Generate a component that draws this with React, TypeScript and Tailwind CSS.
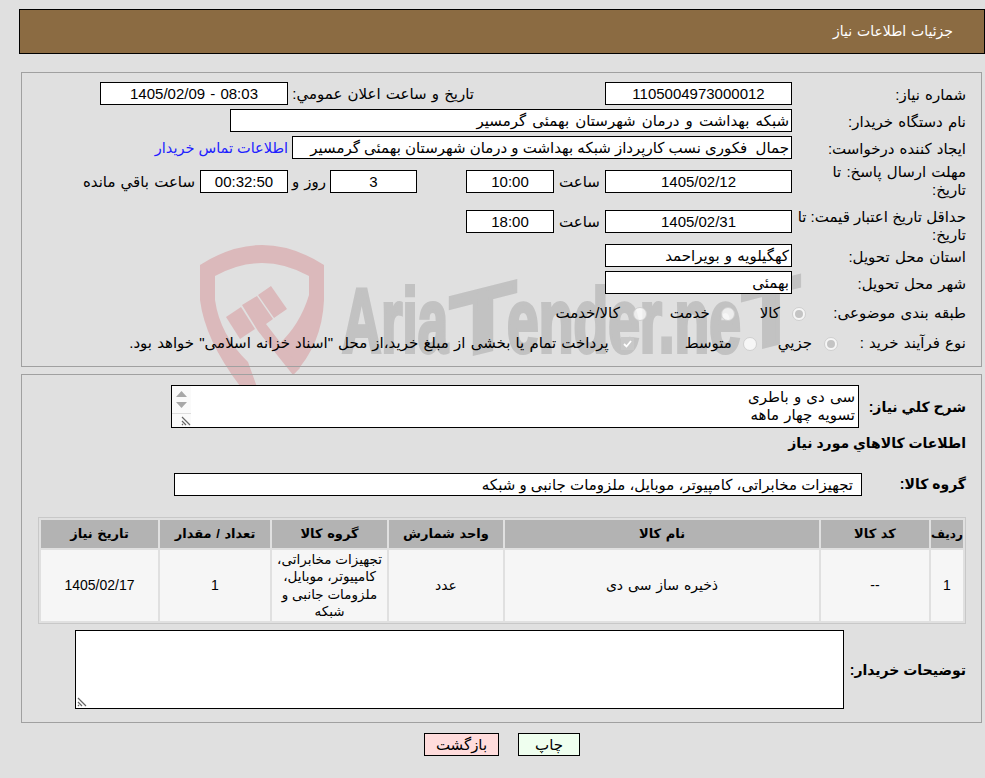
const FONT = "font-['Liberation_Sans','DejaVu_Sans',sans-serif]"

function Field({ className, children }: { className: string; children?: React.ReactNode }) {
  return (
    <div className={`h-[23px] shrink-0 overflow-hidden whitespace-nowrap border border-black bg-white px-[2px] text-[15px] leading-[21px] ${className}`}>
      {children}
    </div>
  )
}

function Label({ children }: { children: React.ReactNode }) {
  return <div className="w-[174px] shrink-0 whitespace-nowrap pt-[1px] text-[15px] leading-[23px]">{children}</div>
}

function Radio({ checked }: { checked?: boolean }) {
  return (
    <span className="flex h-[14px] w-[14px] shrink-0 items-center justify-center rounded-full border border-[#cfcfcf] bg-white/70">
      {checked && <span className="h-[8px] w-[8px] rounded-full bg-[#c4c4c4]" />}
    </span>
  )
}

function Resizer() {
  return (
    <svg width="10" height="10" viewBox="0 0 10 10" className="block">
      <path d="M1 1l8 8M1 5l4 4M1 8l1 1" stroke="#666" strokeWidth="1.2" fill="none" />
    </svg>
  )
}

function Watermark() {
  return (
    <svg width="985" height="778" viewBox="0 0 985 778" className="pointer-events-none absolute left-0 top-0 [direction:ltr] [word-spacing:0]">
      <g fill="#dbb9bb">
        <path d="M200 265Q262 225 324 265V300Q322 345 293 375L278 345Q300 325 309 295V276Q262 250 215 276V300Q220 335 248 362L257 387L240 386Q205 340 200 300Z" />
        <path d="M226 317L241 307L255 329L240 339Z" />
        <path d="M242 305L257 296L273 319L266 324L300 368L293 375L258 331Z" />
        <path d="M258 295L271 286L287 309L274 318Z" />
      </g>
      <g fill="#c2c2c2" stroke="#c2c2c2" strokeWidth="4" fontFamily="'Liberation Sans',sans-serif" fontWeight="700" fontSize="90">
        <text x="342" y="352" textLength="106" lengthAdjust="spacingAndGlyphs">Aria</text>
        <text x="450" y="352" textLength="66" lengthAdjust="spacingAndGlyphs" transform="translate(0 120) skewY(-14)">T</text>
        <text x="507" y="352" textLength="234" lengthAdjust="spacingAndGlyphs">ender.ne</text>
        <text x="742" y="352" textLength="58" lengthAdjust="spacingAndGlyphs" transform="translate(0 185) skewY(-14)">T</text>
      </g>
    </svg>
  )
}

const headers = ['ردیف', 'کد کالا', 'نام کالا', 'واحد شمارش', 'گروه کالا', 'تعداد / مقدار', 'تاریخ نیاز']

export default function App() {
  return (
    <div dir="rtl" className={`relative h-[778px] w-[985px] overflow-hidden bg-[#e0e0e0] text-black [word-spacing:1px] ${FONT}`}>
      <Watermark />
      <div className="relative">
        <div className="ml-[19px] mt-[9px] h-[45px] border border-black bg-[#8b6b42] pr-[31px] text-[14px] leading-[43px] text-white">
          جزئیات اطلاعات نیاز
        </div>

        <div className="ml-[21px] mr-[3px] mt-[18px] h-[295px] border border-[#a0a0a0] pr-[15px] pt-[9px]">
          <div className="flex h-[27px]">
            <Label>شماره نیاز:</Label>
            <Field className="w-[187px] text-center">1105004973000012</Field>
            <div className="w-[131px] shrink-0" />
            <div className="w-[186px] shrink-0 text-[15px] leading-[23px]">تاریخ و ساعت اعلان عمومي:</div>
            <Field className="w-[188px] text-center">08:03 - 1405/02/09</Field>
          </div>
          <div className="flex h-[27px]">
            <Label>نام دستگاه خریدار:</Label>
            <Field className="w-[562px] [word-spacing:2px]">شبکه بهداشت و درمان شهرستان بهمئی گرمسیر</Field>
          </div>
          <div className="flex h-[27px]">
            <Label>ایجاد کننده درخواست:</Label>
            <Field className="w-[500px] [word-spacing:0px]">جمال&nbsp; فکوری نسب کارپرداز شبکه بهداشت و درمان شهرستان بهمئی گرمسیر</Field>
            <a className="mr-[4px] pt-[1px] text-[14.500px] leading-[23px] text-[#2020ff] [word-spacing:0px]">اطلاعات تماس خریدار</a>
          </div>
          <div className="flex h-[45px] pt-[7px]">
            <div className="-mt-[7px] w-[174px] shrink-0 pl-[7px] text-[15px] leading-[18px]">مهلت ارسال پاسخ: تا تاریخ:</div>
            <Field className="w-[187px] text-center">1405/02/12</Field>
            <div className="w-[51px] shrink-0 text-center text-[15px] leading-[23px]">ساعت</div>
            <Field className="w-[88px] text-center">10:00</Field>
            <div className="w-[49px] shrink-0" />
            <Field className="w-[87px] text-center">3</Field>
            <div className="w-[42px] shrink-0 text-center text-[15px] leading-[23px]">روز و</div>
            <Field className="w-[88px] bg-[#ffffe8] text-center">00:32:50</Field>
            <div className="mr-[5px] whitespace-nowrap text-[15px] leading-[23px]">ساعت باقي مانده</div>
          </div>
          <div className="flex h-[36px] pt-[2px]">
            <div className="-mt-[2px] w-[174px] shrink-0 text-[15px] leading-[18px] [word-spacing:0px]">حداقل تاریخ اعتبار قیمت: تا تاریخ:</div>
            <Field className="w-[187px] text-center">1405/02/31</Field>
            <div className="w-[51px] shrink-0 text-center text-[15px] leading-[23px]">ساعت</div>
            <Field className="w-[88px] text-center">18:00</Field>
          </div>
          <div className="flex h-[27px]">
            <Label>استان محل تحویل:</Label>
            <Field className="w-[187px]">کهگیلویه و بویراحمد</Field>
          </div>
          <div className="flex h-[27px]">
            <Label>شهر محل تحویل:</Label>
            <Field className="w-[187px]">بهمئی</Field>
          </div>
          <div className="flex h-[31px] items-center whitespace-nowrap text-[15px]">
            <div className="w-[160px] shrink-0">طبقه بندی موضوعی:</div>
            <Radio checked />
            <span className="mr-[12px]">کالا</span>
            <span className="mr-[25px]"><Radio /></span>
            <span className="mr-[11px]">خدمت</span>
            <span className="mr-[23px]"><Radio /></span>
            <span className="mr-[13px]">کالا/خدمت</span>
          </div>
          <div className="flex h-[29px] items-center whitespace-nowrap text-[15px]">
            <div className="w-[128px] shrink-0">نوع فرآیند خرید :</div>
            <Radio checked />
            <span className="mr-[12px]">جزیي</span>
            <span className="mr-[21px]"><Radio /></span>
            <span className="mr-[11px]">متوسط</span>
            <span className="mr-[51px] flex h-[13px] w-[13px] items-center justify-center bg-[#c8c8c8]">
              <svg width="11" height="11" viewBox="0 0 11 11"><path d="M2 6l2.5 2.5L9 3" stroke="#fff" strokeWidth="1.8" fill="none" /></svg>
            </span>
            <span className="mr-[12px]">پرداخت تمام یا بخشی از مبلغ خرید،از محل "اسناد خزانه اسلامی" خواهد بود.</span>
          </div>
        </div>

        <div className="ml-[21px] mr-[3px] mt-[7px] h-[349px] border border-[#a0a0a0] pr-[15px] pt-[10px]">
          <div className="flex h-[43px]">
            <div className="w-[107px] shrink-0 whitespace-nowrap pt-[1px] text-[14px] font-bold leading-[43px] [word-spacing:0px]">شرح کلي نیاز:</div>
            <div className="flex h-[43px] w-[688px] shrink-0 border border-black bg-white">
              <div className="min-w-0 flex-1 pr-[3px] pt-[2px] text-[15px] leading-[18px]">
                <div>سی دی و باطری</div>
                <div>تسویه چهار ماهه</div>
              </div>
              <div className="flex w-[19px] shrink-0 flex-col items-center bg-[#fafafa]">
                <svg width="15" height="24" viewBox="0 0 15 24" className="mt-[2px]">
                  <path d="M2 9L7.500 3L13 9Z" fill="#a8a8a8" />
                  <path d="M2 14H13L7.500 20Z" fill="#a8a8a8" />
                </svg>
                <div className="mt-[1px] flex w-full flex-1 items-end justify-start border-t border-[#ddd] pb-[1px] pl-[1px]"><Resizer /></div>
              </div>
            </div>
          </div>
          <div className="h-[30px] whitespace-nowrap text-[14px] font-bold leading-[30px] [word-spacing:0px]">اطلاعات کالاهاي مورد نیاز</div>
          <div className="mt-[15px] flex h-[23px]">
            <div className="w-[104px] shrink-0 whitespace-nowrap text-[14px] font-bold leading-[23px] [word-spacing:0px]">گروه کالا:</div>
            <Field className="w-[688px] pr-[8px] [word-spacing:0px]">تجهیزات مخابراتی، کامپیوتر، موبایل، ملزومات جانبی و شبکه</Field>
          </div>
          <table className="mt-[21px] w-[928px] table-fixed border-separate border-spacing-[2px] border border-[#c8c8c8] text-center text-[14px]">
            <colgroup>
              <col className="w-[32px]" />
              <col className="w-[108px]" />
              <col className="w-[314px]" />
              <col className="w-[114px]" />
              <col className="w-[115px]" />
              <col className="w-[110px]" />
              <col className="w-[117px]" />
            </colgroup>
            <thead>
              <tr>
                {headers.map((header, index) => (
                  <th key={header} className={`h-[28px] whitespace-nowrap bg-[#b3b3b3] p-0 font-bold ${index === 0 ? 'text-[12px]' : 'text-[13px]'}`}>{header}</th>
                ))}
              </tr>
            </thead>
            <tbody>
              <tr className="h-[71px] bg-[#f6f6f6] text-[14px]">
                <td className="p-0">1</td>
                <td className="p-0">--</td>
                <td className="p-0">ذخیره ساز سی دی</td>
                <td className="p-0">عدد</td>
                <td className="p-0 text-[13.500px] leading-[17.500px] [word-spacing:0px]">تجهیزات مخابراتی، کامپیوتر، موبایل، ملزومات جانبی و شبکه</td>
                <td className="p-0">1</td>
                <td className="p-0">1405/02/17</td>
              </tr>
            </tbody>
          </table>
          <div className="mt-[6px] flex h-[79px]">
            <div className="w-[122px] shrink-0 whitespace-nowrap pt-[1px] text-[14px] font-bold leading-[79px] [word-spacing:0px]">توضیحات خریدار:</div>
            <div className="flex h-[79px] w-[769px] shrink-0 items-end justify-end border border-black bg-white pb-[1px] pl-[1px]">
              <Resizer />
            </div>
          </div>
        </div>

        <div className="mt-[10px] flex justify-center gap-[19px] pl-[19px]">
          <button type="button" className="h-[23px] w-[62px] border border-black bg-[#efffef] text-[15px] leading-[21px]">چاپ</button>
          <button type="button" className="h-[23px] w-[75px] border border-black bg-[#ffdcdc] text-[15px] leading-[21px]">بازگشت</button>
        </div>
      </div>
    </div>
  )
}
